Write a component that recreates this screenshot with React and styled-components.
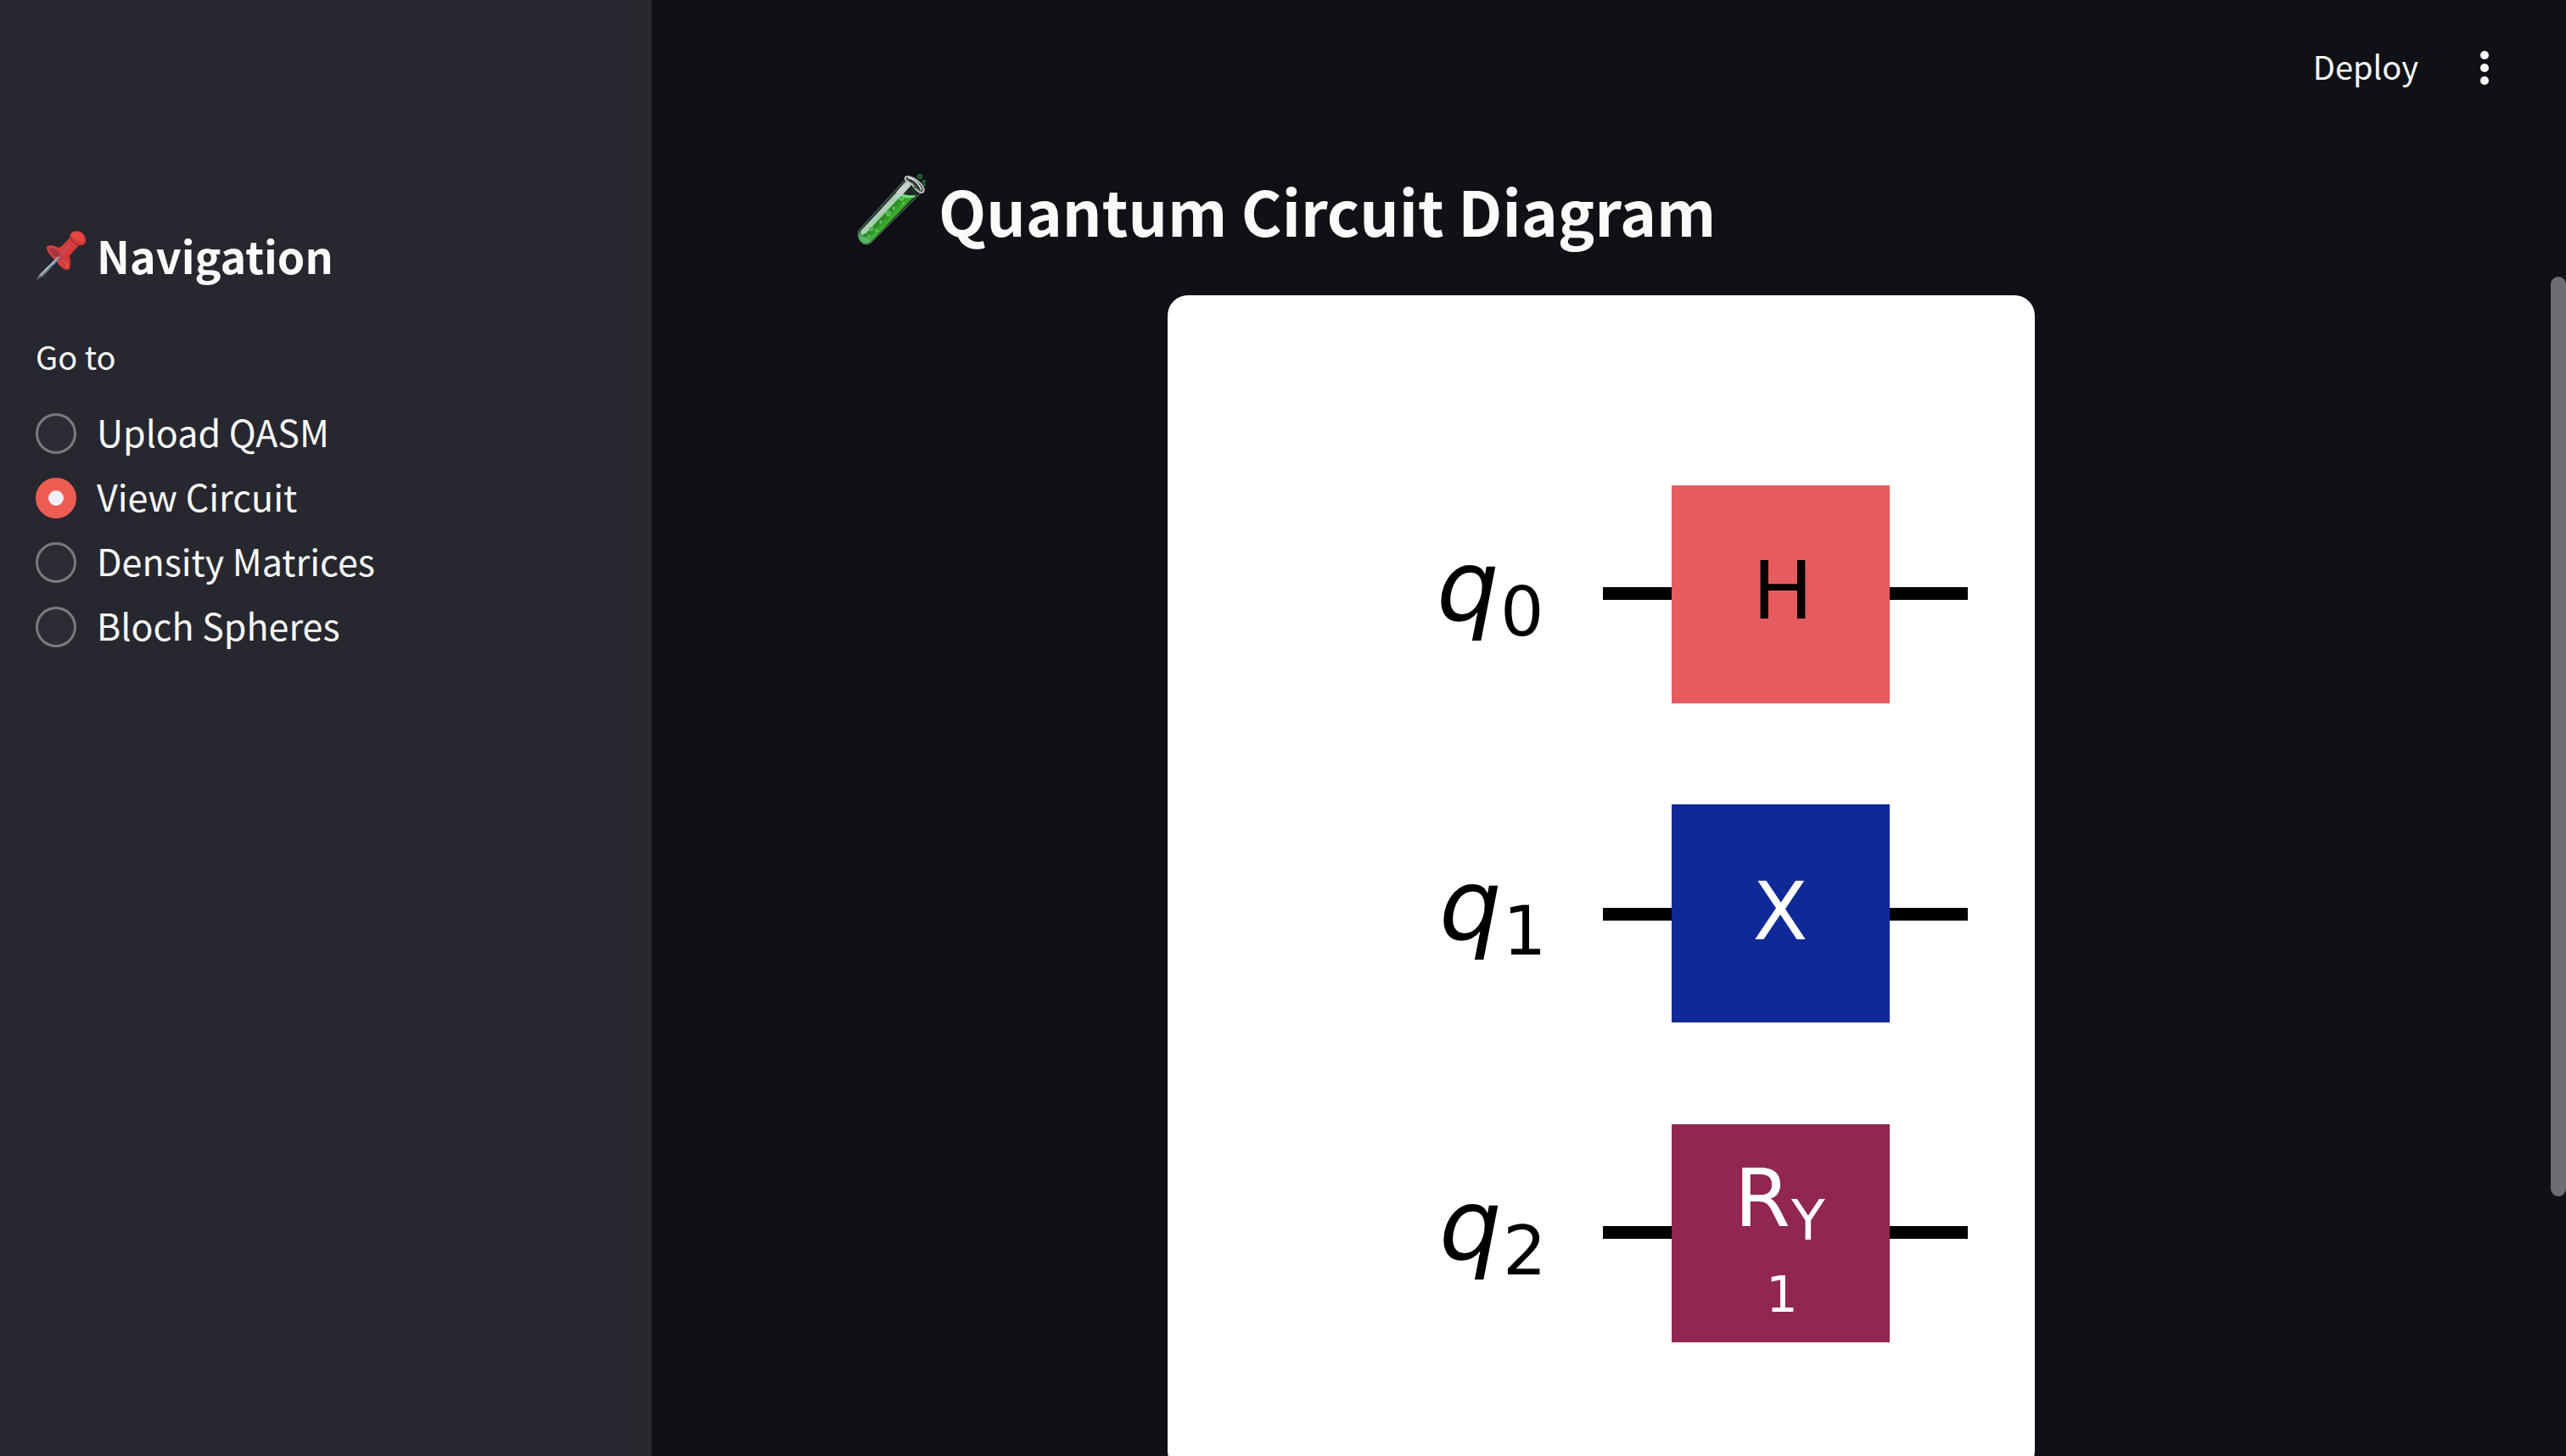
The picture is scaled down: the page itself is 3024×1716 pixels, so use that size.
import React, { useState } from "react";
import styled, { createGlobalStyle } from "styled-components";

const GlobalStyle = createGlobalStyle`
  *, *::before, *::after { box-sizing: border-box; }
  body {
    margin: 0;
    background: #101116;
    color: #fafafa;
    font-family: "Noto Sans CJK SC", "Noto Sans", sans-serif;
  }
`;

const Shell = styled.div`
  display: flex;
  height: 100vh;
  overflow: hidden;
`;

const Sidebar = styled.aside`
  flex: none;
  width: 768px;
  padding: 265px 42px 0;
  background: linear-gradient(to left, #28292c, #27272f 24px);
`;

const SidebarTitle = styled.h2`
  display: flex;
  align-items: center;
  gap: 12px;
  margin: 0 0 53px;
  font-size: 52px;
  line-height: 72px;
  font-weight: 700;
`;

const RadioGroup = styled.fieldset`
  display: flex;
  flex-direction: column;
  gap: 4px;
  margin: 0;
  padding: 0;
  border: 0;
`;

const GroupLabel = styled.legend`
  padding: 0 0 25px;
  font-size: 38px;
  line-height: 60px;
`;

const Option = styled.label`
  display: flex;
  align-items: center;
  gap: 24px;
  height: 72px;
  font-size: 43px;
  line-height: 66px;
  cursor: pointer;
`;

const OptionText = styled.span`
  padding-bottom: 6px;
`;

const Radio = styled.input`
  appearance: none;
  flex: none;
  width: 48px;
  height: 48px;
  margin: 0;
  border: 3px solid #7b7b7f;
  border-radius: 50%;
  background: #2b2b34;

  &:checked {
    border: 15px solid #ed5c53;
    background: #eff1f6;
  }
`;

const Main = styled.main`
  flex: 1;
  min-width: 0;
  display: flex;
  flex-direction: column;
`;

const Toolbar = styled.header`
  flex: none;
  display: flex;
  justify-content: flex-end;
  align-items: center;
  gap: 48px;
  height: 160px;
  padding-right: 66px;
`;

const ToolbarButton = styled.button`
  display: flex;
  justify-content: center;
  align-items: center;
  min-width: 60px;
  padding: 0;
  border: 0;
  background: none;
  color: inherit;
  font: inherit;
  font-size: 38px;
  line-height: 60px;
`;

const ButtonText = styled.span`
  padding-bottom: 4px;
`;

const Content = styled.section`
  padding: 37px 258px 0 240px;
`;

const PageTitle = styled.h1`
  display: flex;
  align-items: center;
  gap: 14px;
  margin: 0 0 51px;
  font-size: 73px;
  line-height: 100px;
  font-weight: 700;
`;

const DiagramCard = styled.figure`
  max-width: 1022px;
  margin: 0 auto;
  border-radius: 24px;
  background: #fff;
  overflow: hidden;
`;

const Diagram = styled.svg`
  display: block;
  width: 100%;
  height: auto;
  font-family: "DejaVu Sans", sans-serif;
`;

const ScrollTrack = styled.div`
  position: absolute;
  top: 0;
  right: 0;
  bottom: 0;
  width: 18px;
  display: grid;
  grid-template-rows: 326fr 1084fr 306fr;
`;

const ScrollThumb = styled.div`
  grid-row: 2;
  border-radius: 9px;
  background: #6d6e71;
`;

function PinIcon() {
  return (
    <svg width="60" height="60" viewBox="36 30 180 180" aria-hidden="true">
      <defs>
        <linearGradient id="pinBody" x1="0" y1="0" x2="1" y2="1">
          <stop offset="0" stopColor="#c93a3a" />
          <stop offset="0.5" stopColor="#dd3a38" />
          <stop offset="1" stopColor="#b02c31" />
        </linearGradient>
        <linearGradient id="pinNeedle" x1="0" y1="1" x2="1" y2="0">
          <stop offset="0" stopColor="#77797c" />
          <stop offset="0.4" stopColor="#a9bfcc" />
          <stop offset="0.7" stopColor="#6f9fc0" />
          <stop offset="1" stopColor="#a0506a" />
        </linearGradient>
      </defs>
      <path d="M77 88C84 80 103 84 120 98C111 114 120 121 112 131C96 133 69 105 77 88Z" fill="#a83540" />
      <path d="M76 92C83 82 103 84 118 93L128 87L158 57C154 42 170 32 185 34C202 36 215 53 213 69C211 81 201 87 190 83L155 122C161 139 163 158 153 170C143 175 122 164 112 143C96 130 76 106 76 92Z" fill="url(#pinBody)" />
      <path d="M158 48C163 67 181 87 200 83C213 78 214 61 204 49C192 33 168 30 158 48Z" fill="#d63b38" />
      <path d="M161 47C168 34 187 34 198 46C207 56 210 68 203 71C193 73 169 61 161 47Z" fill="#e24a43" />
      <path d="M158 55C164 70 176 82 190 83" fill="none" stroke="#9e2a30" strokeWidth="4" />
      <path d="M78 91C88 84 106 92 120 104C141 121 155 148 150 166C139 163 128 154 119 140C97 129 79 108 78 91Z" fill="#c9383a" stroke="#e0504b" strokeWidth="3" />
      <path d="M84 95C95 90 111 98 122 111L113 126C98 120 86 107 84 95Z" fill="#a03642" />
      <path d="M118 119L158 73L164 79L124 127Z" fill="#b55368" opacity="0.7" />
      <path d="M130 137C139 143 146 151 148 162" fill="none" stroke="#f06058" strokeWidth="4" />
      <path d="M38 207L51 187L117 122L126 127L60 194Z" fill="url(#pinNeedle)" />
      <path d="M51 191L116 125" stroke="#d7e8f1" strokeWidth="3" />
      <path d="M45 202L95 154" stroke="#3e3d42" strokeWidth="3" />
    </svg>
  );
}

function TestTubeIcon() {
  return (
    <svg width="84" height="88" viewBox="24 36 252 264" aria-hidden="true">
      <defs>
        <linearGradient id="tubeLiquid" gradientUnits="userSpaceOnUse" x1="110" y1="155" x2="165" y2="205">
          <stop offset="0" stopColor="#57a857" />
          <stop offset="0.5" stopColor="#2b8a27" />
          <stop offset="0.8" stopColor="#3faf2b" />
          <stop offset="1" stopColor="#256f24" />
        </linearGradient>
      </defs>
      <path d="M204 58L37 241C30 258 36 277 50 287C63 294 76 289 84 280L260 104Z" fill="#1b2a24" stroke="#71897d" strokeWidth="3" />
      <path d="M168 115C190 110 215 122 237 118L82 279C70 292 53 290 43 279C34 269 34 255 41 245Z" fill="url(#tubeLiquid)" />
      <path d="M166 116C188 108 212 123 239 116L231 126C207 129 187 122 158 125Z" fill="#77d97c" />
      <path d="M190 84L43 244L46 259L63 250L216 87L216 66Z" fill="#c4ddd0" opacity="0.8" />
      <path d="M203 67L167 108L190 117L225 78Z" fill="#d3d6d6" opacity="0.8" />
      <path d="M38 252C45 269 60 273 76 264C89 258 98 248 106 239L82 273C69 294 46 291 38 274Z" fill="#42b04c" />
      <path d="M39 257C47 265 55 266 66 264L77 280C61 292 42 283 39 257Z" fill="#66b77a" opacity="0.7" />
      <path d="M200 56C205 45 231 55 248 70C263 83 271 99 263 106C252 113 234 95 225 80C218 70 202 72 200 56Z" fill="#2c302f" stroke="#bfc1c1" strokeWidth="6" />
      <path d="M210 57C227 56 251 78 258 99" fill="none" stroke="#eeeeee" strokeWidth="4" />
      <path d="M226 72C232 86 244 99 258 102" fill="none" stroke="#7d8380" strokeWidth="3" />
      <g fill="#4ab64a" stroke="#7edc75" strokeWidth="2">
        <circle cx="187" cy="128" r="8" />
        <circle cx="141" cy="182" r="8" />
        <circle cx="80" cy="236" r="7" />
        <circle cx="114" cy="212" r="4" />
        <circle cx="99" cy="242" r="4" />
        <circle cx="160" cy="164" r="4" />
        <circle cx="194" cy="146" r="3" />
        <circle cx="72" cy="261" r="3" />
      </g>
      <g fill="#153b1d" stroke="#2f7a38" strokeWidth="4">
        <circle cx="252" cy="52" r="7" />
        <circle cx="266" cy="70" r="5" />
        <circle cx="236" cy="88" r="4" />
        <circle cx="268" cy="81" r="2" />
      </g>
    </svg>
  );
}

function MoreIcon() {
  return (
    <svg width="60" height="60" viewBox="0 0 60 60" fill="currentColor" aria-hidden="true">
      <circle cx="30" cy="15" r="5" />
      <circle cx="30" cy="30" r="5" />
      <circle cx="30" cy="45" r="5" />
    </svg>
  );
}

function Qubit({ index, x, top, wireY, color, children }) {
  return (
    <g transform={`translate(0 ${top})`}>
      <text x={x} y="159" fontSize="116" fontStyle="italic">q</text>
      <text x={x + 75} y="177" fontSize="81">{index}</text>
      <rect x="513" y={wireY} width="430" height="15" />
      <rect x="594" width="257" height="257" fill={color} />
      {children}
    </g>
  );
}

function CircuitDiagram() {
  return (
    <Diagram viewBox="0 0 1022 1386" role="img" aria-label="Quantum circuit with three qubits">
      <Qubit index="0" x={317} top={224} wireY={120} color="#e65c5e">
        <text x="725" y="157" fontSize="95" textAnchor="middle">H</text>
      </Qubit>
      <Qubit index="1" x={320} top={600} wireY={122} color="#0f2a97">
        <text x="722" y="159" fontSize="95" textAnchor="middle" fill="#fff">X</text>
      </Qubit>
      <Qubit index="2" x={320} top={977} wireY={120} color="#912750">
        <text x="668" y="120" fontSize="95" fill="#fff">R</text>
        <text x="735" y="136" fontSize="65" fill="#fff">Y</text>
        <text x="724" y="221" fontSize="59" textAnchor="middle" fill="#fff">1</text>
      </Qubit>
    </Diagram>
  );
}

const pages = ["Upload QASM", "View Circuit", "Density Matrices", "Bloch Spheres"];

export default function App() {
  const [page, setPage] = useState("View Circuit");
  return (
    <>
      <GlobalStyle />
      <Shell>
        <Sidebar>
          <SidebarTitle>
            <PinIcon />
            Navigation
          </SidebarTitle>
          <RadioGroup>
            <GroupLabel>Go to</GroupLabel>
            {pages.map((name) => (
              <Option key={name}>
                <Radio type="radio" name="page" checked={page === name} onChange={() => setPage(name)} />
                <OptionText>{name}</OptionText>
              </Option>
            ))}
          </RadioGroup>
        </Sidebar>
        <Main>
          <Toolbar>
            <ToolbarButton type="button">
              <ButtonText>Deploy</ButtonText>
            </ToolbarButton>
            <ToolbarButton type="button" aria-label="Main menu">
              <MoreIcon />
            </ToolbarButton>
          </Toolbar>
          <Content>
            <PageTitle>
              <TestTubeIcon />
              Quantum Circuit Diagram
            </PageTitle>
            <DiagramCard>
              <CircuitDiagram />
            </DiagramCard>
          </Content>
        </Main>
        <ScrollTrack>
          <ScrollThumb />
        </ScrollTrack>
      </Shell>
    </>
  );
}
